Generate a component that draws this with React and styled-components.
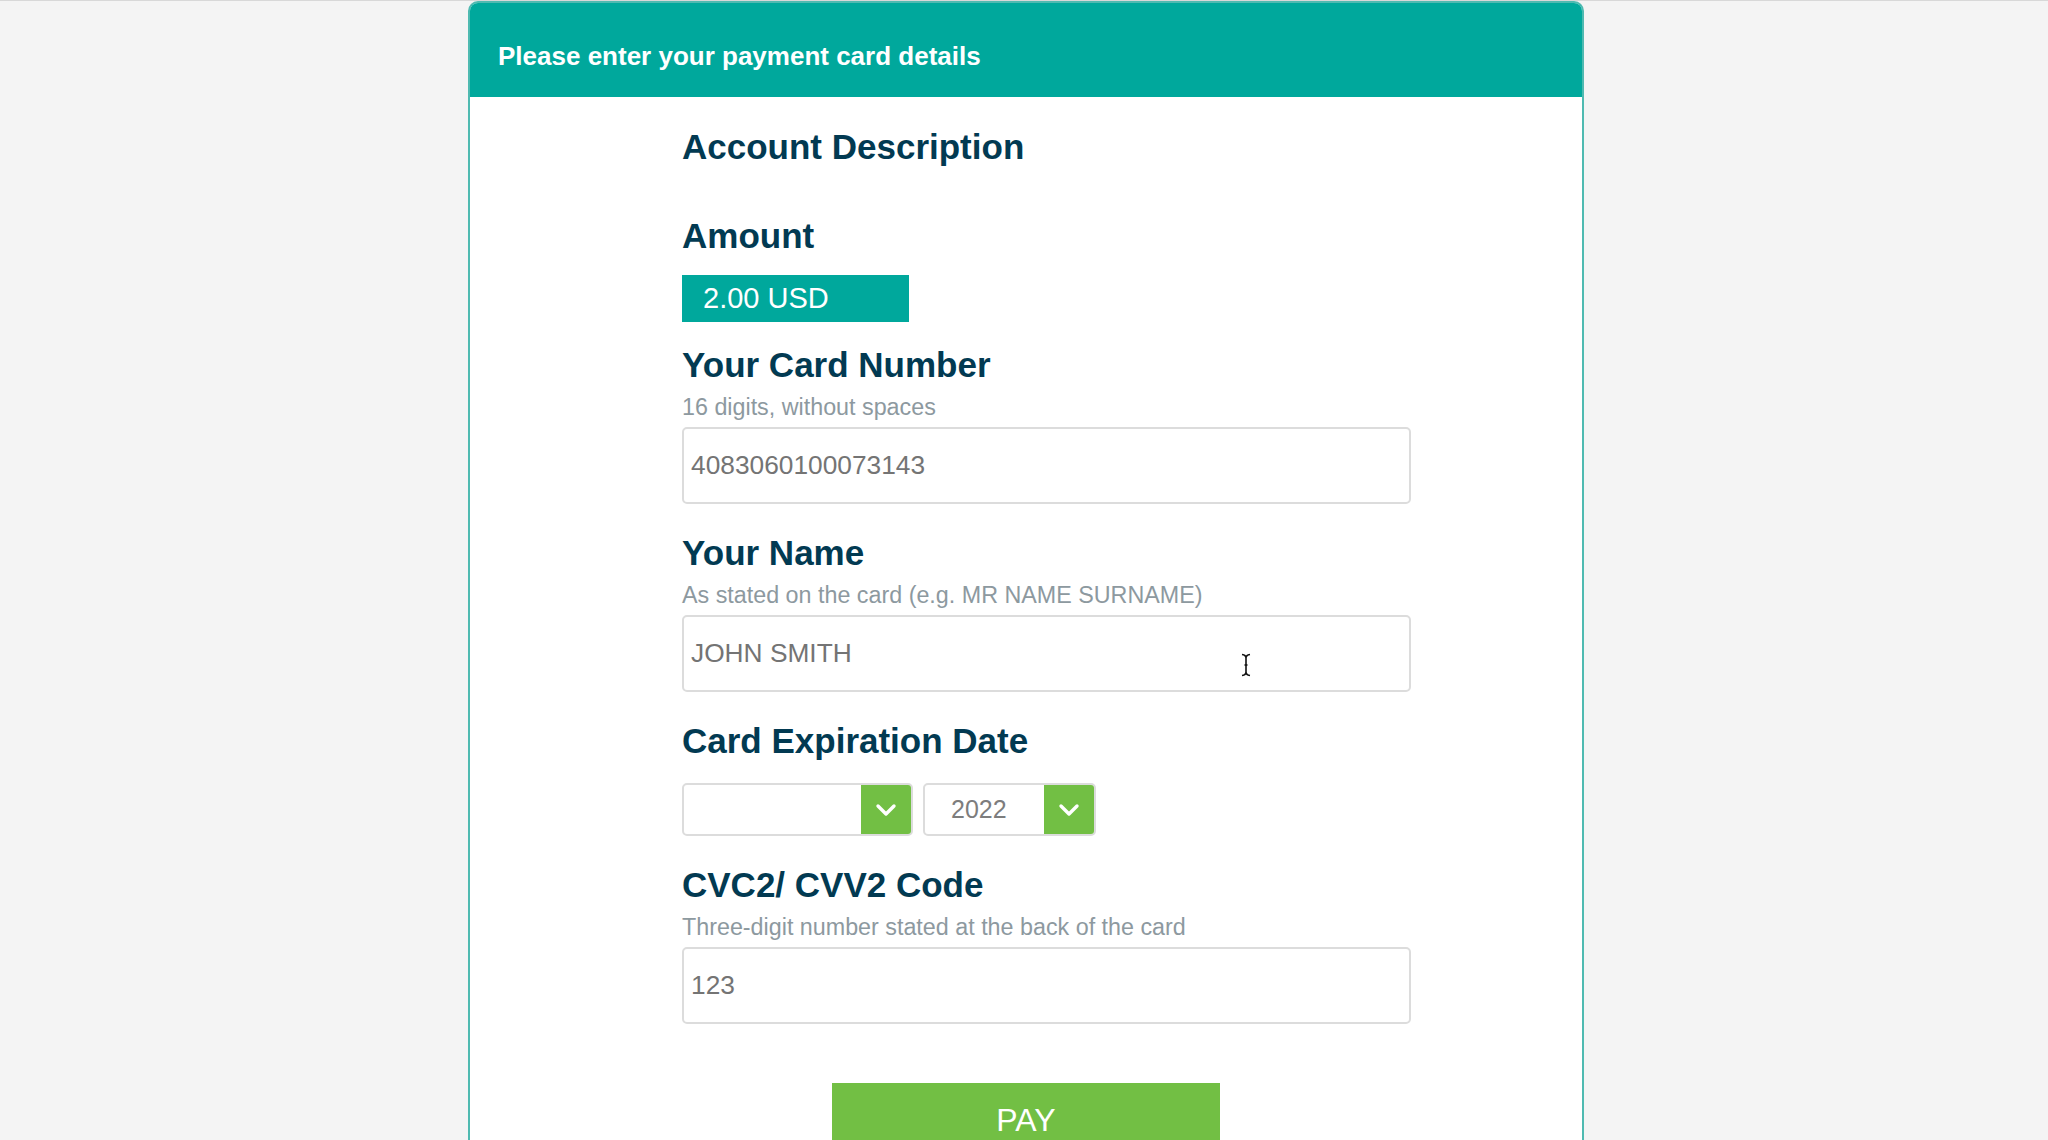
import React from "react";
import styled, { createGlobalStyle } from "styled-components";

const GlobalStyle = createGlobalStyle`
  html, body {
    margin: 0;
    padding: 0;
    background: #f4f4f4;
  }
  body {
    border-top: 1px solid #d8d8d8;
    padding-left: 4px;
    font-family: "Liberation Sans", Arial, Helvetica, sans-serif;
  }
`;

const Card = styled.div`
  width: 1112px;
  margin: 0 auto;
  background: #ffffff;
  border: 2px solid #4fbab1;
  border-radius: 10px 10px 0 0;
  overflow: hidden;
  padding-bottom: 60px;
`;

const Header = styled.div`
  height: 94px;
  background: #00a89c;
  display: flex;
  align-items: center;
  padding: 12px 0 0 28px;
  box-sizing: border-box;
  color: #ffffff;
  font-size: 26px;
  font-weight: 700;
`;

const Body = styled.div`
  padding-left: 212px;
  display: flex;
  flex-direction: column;
`;

const Heading = styled.h2`
  margin: ${(p) => p.$top}px 0 0 0;
  font-size: 35px;
  line-height: 40px;
  font-weight: 700;
  color: #023a52;
`;

const Hint = styled.div`
  margin-top: 8px;
  font-size: 23.3px;
  line-height: 28px;
  color: #8d999f;
`;

const AmountBox = styled.div`
  margin-top: 19px;
  width: 227px;
  height: 47px;
  box-sizing: border-box;
  background: #00a89c;
  color: #ffffff;
  font-size: 29px;
  display: flex;
  align-items: center;
  padding-left: 21px;
`;

const InputWrap = styled.div`
  position: relative;
  margin-top: 6px;
  width: 729px;
`;

const TextInput = styled.input`
  display: block;
  width: 100%;
  height: 77px;
  box-sizing: border-box;
  border: 2px solid #dcdcdc;
  border-radius: 5px;
  padding: 0 0 0 7px;
  font-family: "Liberation Sans", Arial, Helvetica, sans-serif;
  font-size: 26.3px;
  color: #747474;
  background: #ffffff;
  outline: none;
`;

const Cursor = styled.svg`
  position: absolute;
  left: 558px;
  top: 38px;
`;

const SelectRow = styled.div`
  margin-top: 22px;
  display: flex;
  gap: 10px;
`;

const Select = styled.div`
  width: ${(p) => p.$w}px;
  height: 53px;
  box-sizing: border-box;
  border: 2px solid #dcdcdc;
  border-radius: 5px;
  display: flex;
  overflow: hidden;
  background: #ffffff;
`;

const SelectValue = styled.div`
  flex: 1;
  display: flex;
  align-items: center;
  padding-left: 26px;
  font-size: 25px;
  color: #7d7d7d;
`;

const SelectArrow = styled.div`
  width: 50px;
  background: #72bf44;
  display: flex;
  align-items: center;
  justify-content: center;
`;

const PayButton = styled.button`
  align-self: center;
  margin: 59px 0 0 -212px;
  width: 388px;
  height: 72px;
  border: none;
  background: #72bf44;
  color: #ffffff;
  font-family: "Liberation Sans", Arial, Helvetica, sans-serif;
  font-size: 32px;
  padding-top: 4px;
`;

const Chevron = () => (
  <svg width="22" height="14" viewBox="0 0 22 14">
    <polyline
      points="3,3 11,11 19,3"
      fill="none"
      stroke="#ffffff"
      strokeWidth="3.4"
      strokeLinecap="round"
      strokeLinejoin="round"
    />
  </svg>
);

export default function App() {
  return (
    <>
      <GlobalStyle />
      <Card>
        <Header>Please enter your payment card details</Header>
        <Body>
          <Heading $top={30}>Account Description</Heading>
          <Heading $top={49}>Amount</Heading>
          <AmountBox>2.00 USD</AmountBox>

          <Heading $top={23}>Your Card Number</Heading>
          <Hint>16 digits, without spaces</Hint>
          <InputWrap>
            <TextInput defaultValue="4083060100073143" readOnly />
          </InputWrap>

          <Heading $top={29}>Your Name</Heading>
          <Hint>As stated on the card (e.g. MR NAME SURNAME)</Hint>
          <InputWrap>
            <TextInput defaultValue="JOHN SMITH" readOnly />
            <Cursor width="12" height="24" viewBox="0 0 12 24">
              <path
                d="M2 1.5 Q6 2 6 5 Q6 2 10 1.5 M6 5 V19 M4.5 12 H7.5 M2 22.5 Q6 22 6 19 Q6 22 10 22.5"
                fill="none"
                stroke="#111"
                strokeWidth="1.6"
              />
            </Cursor>
          </InputWrap>

          <Heading $top={29}>Card Expiration Date</Heading>
          <SelectRow>
            <Select $w={231}>
              <SelectValue />
              <SelectArrow>
                <Chevron />
              </SelectArrow>
            </Select>
            <Select $w={173}>
              <SelectValue>2022</SelectValue>
              <SelectArrow>
                <Chevron />
              </SelectArrow>
            </Select>
          </SelectRow>

          <Heading $top={29}>CVC2/ CVV2 Code</Heading>
          <Hint>Three-digit number stated at the back of the card</Hint>
          <InputWrap>
            <TextInput defaultValue="123" readOnly />
          </InputWrap>

          <PayButton>PAY</PayButton>
        </Body>
      </Card>
    </>
  );
}
